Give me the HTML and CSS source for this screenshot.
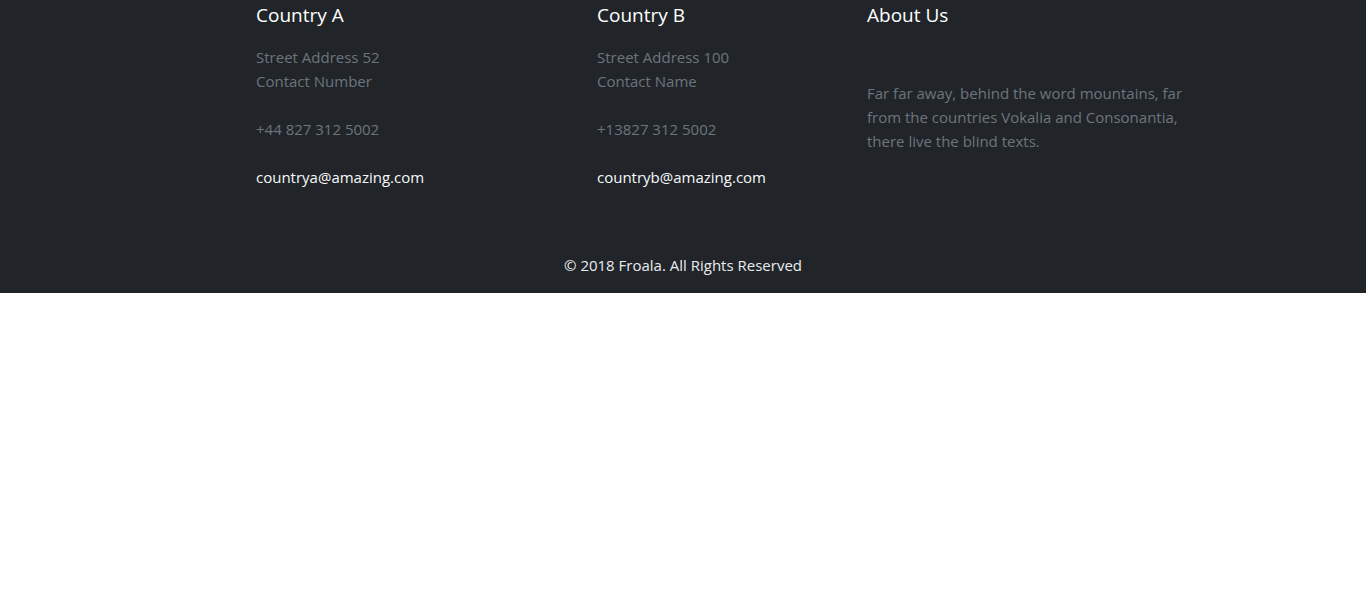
FILE: index.html
```html
<!DOCTYPE html>
<html lang="en">
<head>
<meta charset="utf-8">
<title>Footer</title>
<link rel="stylesheet" href="styles.css">
</head>
<body>
<footer class="footer">
  <div class="cols">
    <div class="col col-a">
      <h3 class="heading">Country A</h3>
      <p class="muted">Street Address 52<br>Contact Number</p>
      <p class="muted">+44 827 312 5002</p>
      <p class="mail">countrya@amazing.com</p>
    </div>
    <div class="col col-b">
      <h3 class="heading">Country B</h3>
      <p class="muted">Street Address 100<br>Contact Name</p>
      <p class="muted">+13827 312 5002</p>
      <p class="mail">countryb@amazing.com</p>
    </div>
    <div class="col col-c">
      <h3 class="heading">About Us</h3>
      <p class="muted about">Far far away, behind the word mountains, far from the countries Vokalia and Consonantia, there live the blind texts.</p>
    </div>
  </div>
  <p class="copy">© 2018 Froala. All Rights Reserved</p>
</footer>
</body>
</html>
```
FILE: styles.css
```css
html, body {
  margin: 0;
  padding: 0;
  background: #ffffff;
}
body {
  font-family: "Open Sans", "Noto Sans", sans-serif;
  font-size: 15px;
  line-height: 24px;
}
.footer {
  background: #212529;
  height: 293px;
  box-sizing: border-box;
  padding-top: 3px;
}
.cols {
  display: flex;
  padding-left: 256px;
}
.col-a { width: 341px; }
.col-b { width: 270px; }
.col-c { width: 330px; }
.heading {
  margin: 0 0 18px;
  font-size: 19px;
  font-weight: 400;
  line-height: 24px;
  color: #ffffff;
}
.col p {
  margin: 0 0 24px;
}
.muted {
  color: #6c757d;
}
.col .about {
  margin-top: 54px;
}
.mail {
  color: #f8f9fa;
}
.copy {
  margin: 40px 0 0;
  text-align: center;
  color: #e9ecef;
}
```
